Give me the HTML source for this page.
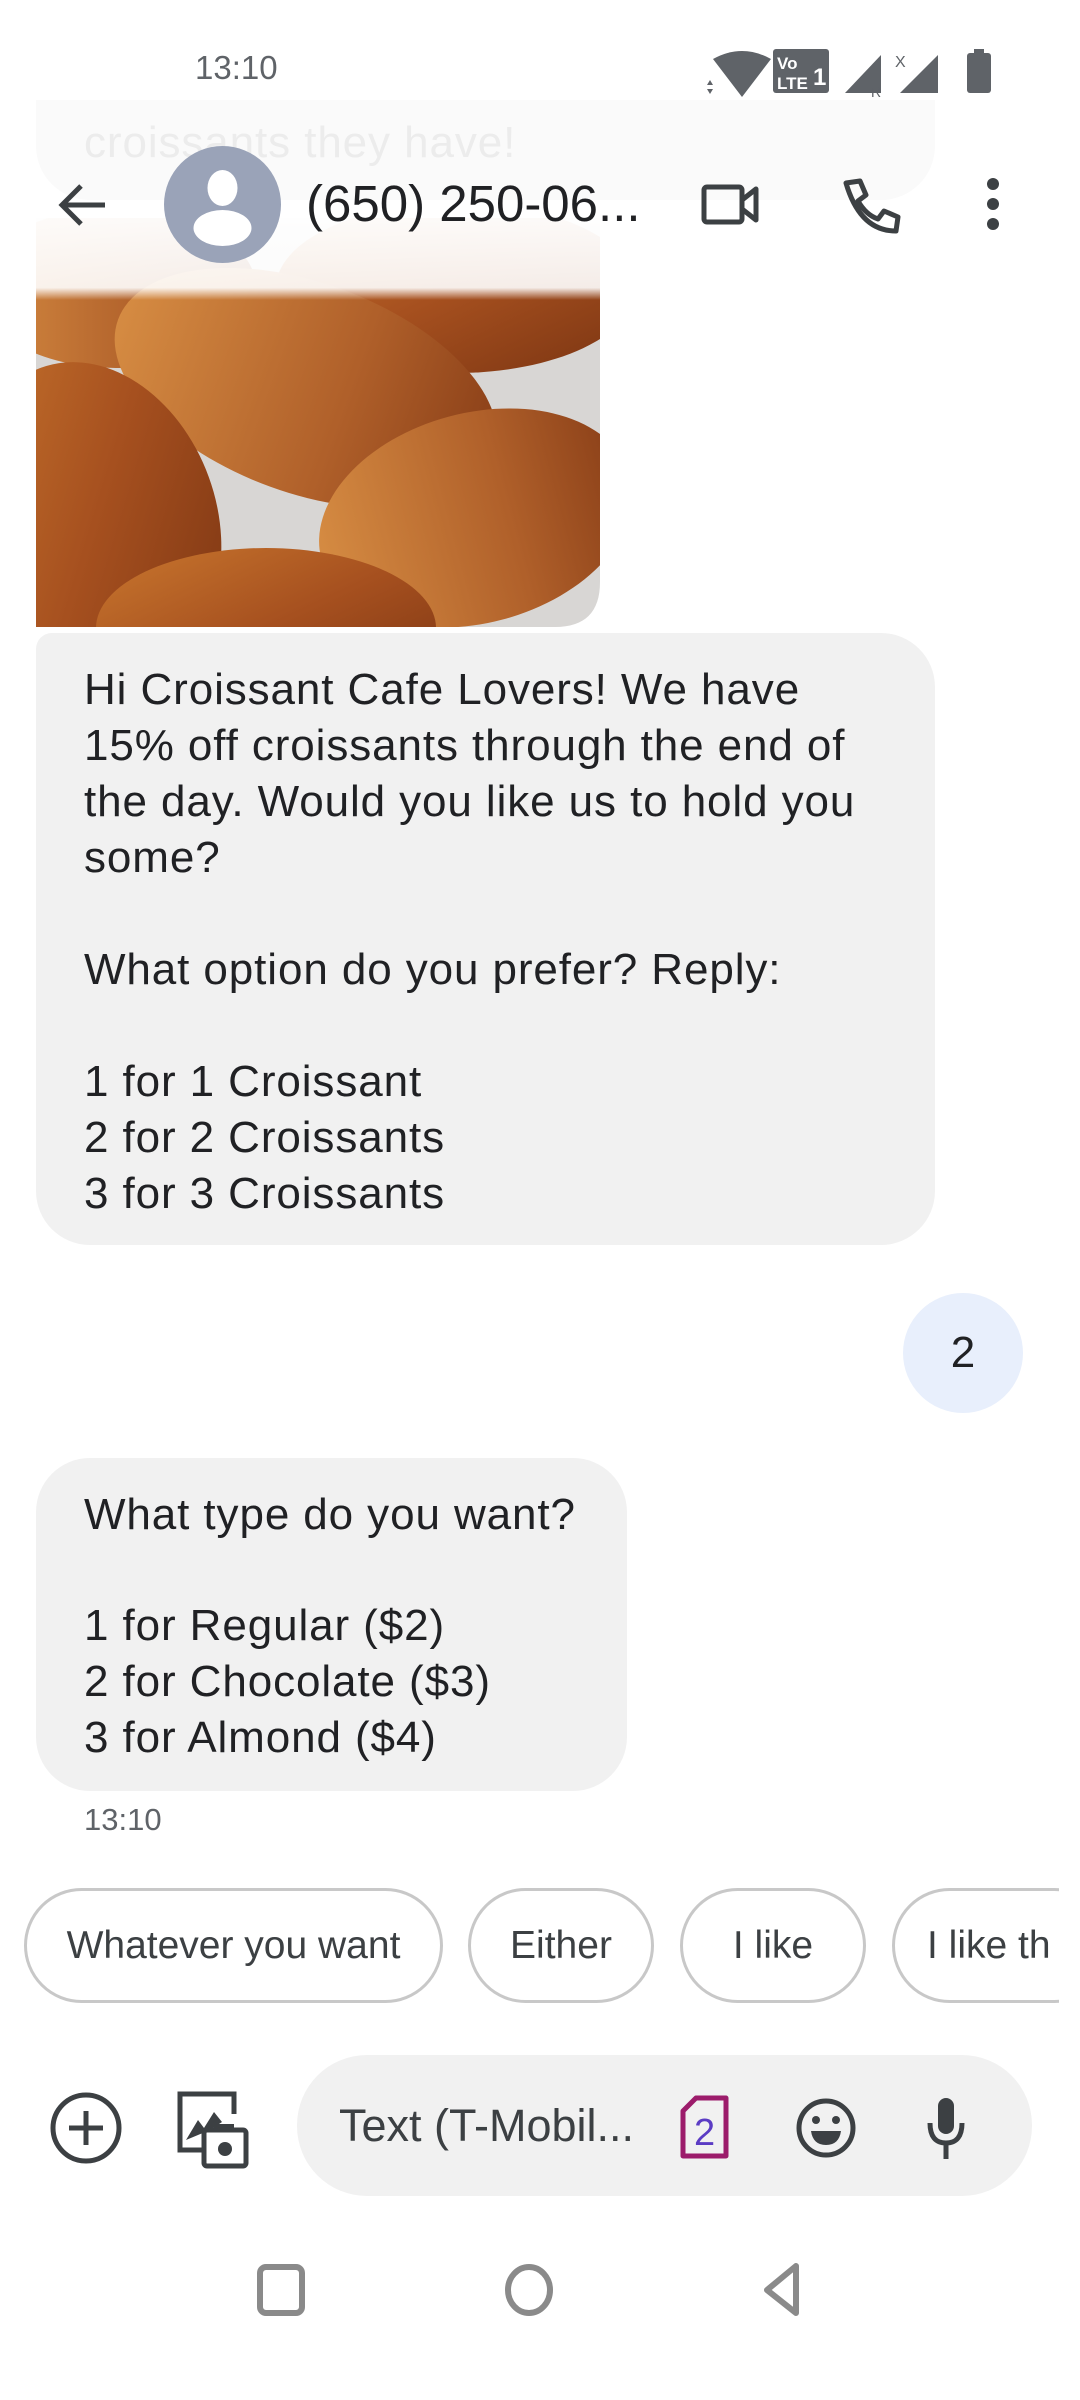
<!DOCTYPE html>
<html><head><meta charset="utf-8"><style>
*{margin:0;padding:0;box-sizing:border-box}
body{width:1080px;height:2400px;background:#fff;position:relative;overflow:hidden;font-family:"Liberation Sans",sans-serif;color:#202124}
.abs{position:absolute}
.bub{position:absolute;background:#f1f1f1;border-radius:54px}
.ln{position:absolute;left:84px;font-size:44px;line-height:56px;white-space:pre;letter-spacing:0.9px}
.chip{position:absolute;top:1888px;height:115px;border:3px solid #c8c8c8;border-radius:58px;font-size:39px;color:#3c4043;display:flex;align-items:center;justify-content:center;white-space:nowrap;overflow:hidden;background:#fff}
</style></head><body>
<!-- status bar -->
<div class="abs" style="left:195px;top:49px;font-size:33px;color:#5f6368">13:10</div>
<svg class="abs" style="left:705px;top:45px" width="320" height="60" viewBox="0 0 320 60">
<path d="M8 14 Q37 -2 66 14 L37 52 Z" fill="#5f6368"/>
<path d="M2 40 l3 -5 l3 5z M2 44 l3 5 l3 -5z" fill="#5f6368"/>
<rect x="68" y="4" width="56" height="44" rx="3" fill="#5f6368"/>
<text x="72" y="24" font-size="17" font-weight="bold" fill="#fff" font-family="Liberation Sans">Vo</text>
<text x="72" y="44" font-size="17" font-weight="bold" fill="#fff" font-family="Liberation Sans">LTE</text>
<text x="108" y="40" font-size="24" font-weight="bold" fill="#fff" font-family="Liberation Sans">1</text>
<path d="M140 48 L176 10 L176 48 Z" fill="#5f6368"/>
<text x="166" y="52" font-size="14" fill="#5f6368" font-family="Liberation Sans">R</text>
<text x="190" y="22" font-size="16" fill="#5f6368" font-family="Liberation Sans">X</text>
<path d="M195 48 L233 10 L233 48 Z" fill="#5f6368"/>
<rect x="262" y="8" width="24" height="40" rx="3" fill="#5f6368"/>
<rect x="269" y="4" width="10" height="5" fill="#5f6368"/>
</svg>
<!-- faded previous bubble -->
<div class="bub" style="left:36px;top:100px;width:899px;height:100px;background:#fafafa;border-radius:0 0 54px 54px"></div>
<div class="abs" style="left:84px;top:118px;font-size:44px;letter-spacing:0.9px;color:#ececec">croissants they have!</div>
<!-- image -->
<svg class="abs" style="left:36px;top:218px" width="564" height="409" viewBox="0 0 564 409">
<defs>
<clipPath id="c"><path d="M0 0 H564 V364 Q564 409 519 409 H0 Z"/></clipPath>
<linearGradient id="cr" x1="0" y1="0" x2="1" y2="1"><stop offset="0" stop-color="#c9772e"/><stop offset=".5" stop-color="#a6501f"/><stop offset="1" stop-color="#7a3412"/></linearGradient>
<linearGradient id="cr2" x1="0" y1="0" x2="1" y2="0"><stop offset="0" stop-color="#d58b42"/><stop offset=".6" stop-color="#b0602a"/><stop offset="1" stop-color="#8a3f18"/></linearGradient>
<linearGradient id="fade" x1="0" y1="0" x2="0" y2="1"><stop offset="0" stop-color="#fff" stop-opacity=".97"/><stop offset=".85" stop-color="#fff" stop-opacity=".9"/><stop offset="1" stop-color="#fff" stop-opacity="0"/></linearGradient>
</defs>
<g clip-path="url(#c)">
<rect width="564" height="409" fill="#d8d6d4"/>
<ellipse cx="80" cy="70" rx="140" ry="80" fill="url(#cr2)"/>
<ellipse cx="420" cy="70" rx="180" ry="85" fill="url(#cr)"/>
<ellipse cx="270" cy="170" rx="200" ry="105" transform="rotate(20 270 170)" fill="url(#cr2)"/>
<ellipse cx="60" cy="300" rx="120" ry="160" transform="rotate(-20 60 300)" fill="url(#cr)"/>
<ellipse cx="440" cy="300" rx="160" ry="105" transform="rotate(-15 440 300)" fill="url(#cr2)"/>
<ellipse cx="230" cy="410" rx="170" ry="80" fill="url(#cr)"/>
<rect width="564" height="82" fill="url(#fade)"/>
</g>
</svg>
<!-- header -->
<svg class="abs" style="left:55px;top:180px" width="56" height="50" viewBox="0 0 56 50"><path d="M50 25 H8 M26 6 L7 25 L26 44" stroke="#3c4043" stroke-width="5" fill="none"/></svg>
<svg class="abs" style="left:164px;top:146px" width="117" height="117" viewBox="0 0 117 117"><circle cx="58.5" cy="58.5" r="58.5" fill="#9aa3b8"/><ellipse cx="58.5" cy="42" rx="15" ry="18" fill="#fff"/><ellipse cx="58.5" cy="82" rx="29" ry="18" fill="#fff"/></svg>
<div class="abs" style="left:306px;top:174px;font-size:51px;color:#202124;letter-spacing:0px">(650) 250-06...</div>
<svg class="abs" style="left:700px;top:180px" width="60" height="50" viewBox="0 0 60 50"><rect x="4" y="7" width="38" height="35" rx="3" stroke="#3c4043" stroke-width="5" fill="none"/><path d="M42 20 L56 9 V40 L42 29" stroke="#3c4043" stroke-width="5" fill="none" stroke-linejoin="round"/></svg>
<svg class="abs" style="left:840px;top:175px" width="62" height="62" viewBox="0 0 62 62"><path d="M6 8 L20 6 L26 20 L18 26 Q26 40 38 44 L44 36 L58 42 L56 56 Q20 56 6 8 Z" stroke="#3c4043" stroke-width="5" fill="none" stroke-linejoin="round"/></svg>
<svg class="abs" style="left:982px;top:176px" width="22" height="58" viewBox="0 0 22 58"><circle cx="11" cy="8" r="6" fill="#3c4043"/><circle cx="11" cy="28" r="6" fill="#3c4043"/><circle cx="11" cy="48" r="6" fill="#3c4043"/></svg>
<!-- bubble 1 -->
<div class="bub" style="left:36px;top:633px;width:899px;height:612px;border-top-left-radius:16px"></div>
<div class="ln" style="top:662px">Hi Croissant Cafe Lovers! We have</div>
<div class="ln" style="top:718px">15% off croissants through the end of</div>
<div class="ln" style="top:774px">the day. Would you like us to hold you</div>
<div class="ln" style="top:830px">some?</div>
<div class="ln" style="top:942px">What option do you prefer? Reply:</div>
<div class="ln" style="top:1054px">1 for 1 Croissant</div>
<div class="ln" style="top:1110px">2 for 2 Croissants</div>
<div class="ln" style="top:1166px">3 for 3 Croissants</div>
<!-- bubble 2 -->
<div class="abs" style="left:903px;top:1293px;width:120px;height:120px;border-radius:60px;background:#e8effc;font-size:44px;display:flex;align-items:center;justify-content:center">2</div>
<!-- bubble 3 -->
<div class="bub" style="left:36px;top:1458px;width:591px;height:333px"></div>
<div class="ln" style="top:1487px">What type do you want?</div>
<div class="ln" style="top:1598px">1 for Regular ($2)</div>
<div class="ln" style="top:1654px">2 for Chocolate ($3)</div>
<div class="ln" style="top:1710px">3 for Almond ($4)</div>
<div class="abs" style="left:84px;top:1802px;font-size:31px;color:#5f6368">13:10</div>
<!-- chips -->
<div class="chip" style="left:24px;width:419px">Whatever you want</div>
<div class="chip" style="left:468px;width:186px">Either</div>
<div class="chip" style="left:680px;width:186px">I like</div>
<div class="chip" style="left:892px;width:220px;justify-content:flex-start;padding-left:32px">I like th</div>
<div class="abs" style="left:1059px;top:1880px;width:21px;height:130px;background:#fff"></div>
<!-- input row -->
<svg class="abs" style="left:49px;top:2091px" width="74" height="74" viewBox="0 0 74 74"><circle cx="37" cy="37" r="33" stroke="#3c4043" stroke-width="5" fill="none"/><path d="M37 20 V54 M20 37 H54" stroke="#3c4043" stroke-width="5"/></svg>
<svg class="abs" style="left:174px;top:2090px" width="76" height="80" viewBox="0 0 76 80"><path d="M28 60 H6 V4 H60 V24" stroke="#3c4043" stroke-width="5" fill="none"/><path d="M12 50 L24 30 L30 38 L40 22 L48 32 L36 40 Z" fill="#3c4043"/><rect x="30" y="40" width="42" height="36" rx="3" stroke="#3c4043" stroke-width="5" fill="#fff"/><rect x="40" y="34" width="20" height="8" fill="#3c4043"/><circle cx="51" cy="59" r="7" fill="#3c4043"/></svg>
<div class="abs" style="left:297px;top:2055px;width:735px;height:141px;border-radius:70px;background:#f1f1f1"></div>
<div class="abs" style="left:339px;top:2100px;font-size:45px;color:#3c4043;letter-spacing:0px">Text (T-Mobil...</div>
<svg class="abs" style="left:680px;top:2095px" width="50" height="64" viewBox="0 0 50 64"><path d="M16 3 H46 V61 H3 V16 Z" stroke="#9c1c6b" stroke-width="5" fill="none" stroke-linejoin="round"/><text x="14" y="50" font-size="38" fill="#5b3cc4" font-family="Liberation Sans">2</text></svg>
<svg class="abs" style="left:795px;top:2097px" width="62" height="62" viewBox="0 0 62 62"><circle cx="31" cy="31" r="27" stroke="#3c4043" stroke-width="5" fill="none"/><circle cx="21" cy="23" r="4" fill="#3c4043"/><circle cx="41" cy="23" r="4" fill="#3c4043"/><path d="M16 34 H46 Q44 48 31 48 Q18 48 16 34 Z" fill="#3c4043"/></svg>
<svg class="abs" style="left:924px;top:2095px" width="44" height="66" viewBox="0 0 44 66"><rect x="14" y="3" width="16" height="36" rx="8" fill="#3c4043"/><path d="M6 28 Q6 48 22 48 Q38 48 38 28" stroke="#3c4043" stroke-width="5" fill="none"/><path d="M22 48 V64" stroke="#3c4043" stroke-width="5"/></svg>
<!-- nav bar -->
<svg class="abs" style="left:250px;top:2260px" width="560" height="60" viewBox="0 0 560 60"><rect x="10" y="7" width="42" height="46" rx="6" stroke="#8a8a8a" stroke-width="6" fill="none"/><ellipse cx="279" cy="30" rx="21" ry="23" stroke="#8a8a8a" stroke-width="6" fill="none"/><path d="M546 6 V53 L517 30 Z" stroke="#8a8a8a" stroke-width="6" fill="none" stroke-linejoin="round"/></svg>
</body></html>
